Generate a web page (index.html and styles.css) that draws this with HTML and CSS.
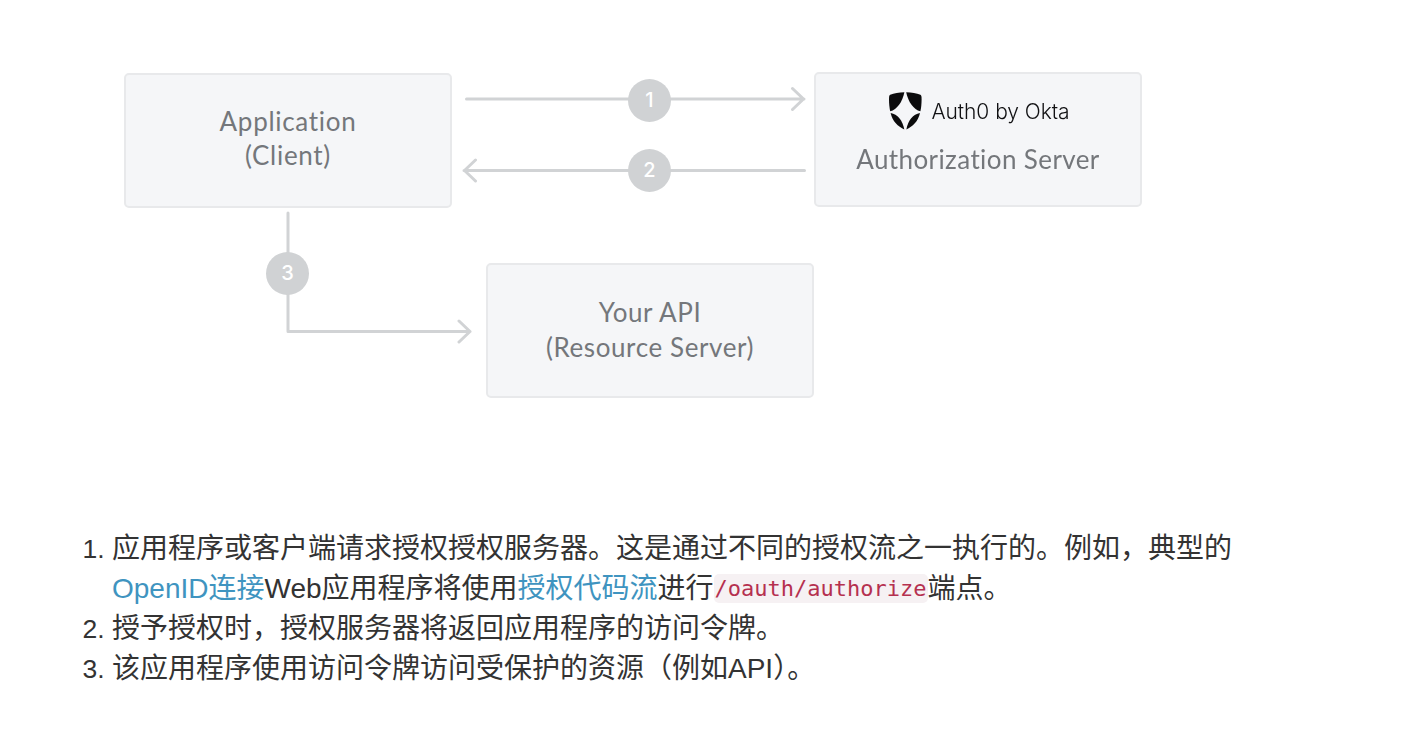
FILE: index.html
```html
<!DOCTYPE html>
<html lang="zh">
<head>
<meta charset="utf-8">
<title>Auth flow</title>
<link rel="stylesheet" href="styles.css">
</head>
<body>
<div class="diagram">
  <svg class="wires" width="1410" height="420" viewBox="0 0 1410 420" fill="none">
    <path d="M466.500 99H804M792.500 88.500L803.500 99L792.500 109.500"/>
    <path d="M804.500 170.500H464M475.500 160L464.500 170.500L475.500 181"/>
    <path d="M288 213V331.500H470M459 321L470 331.500L459 342"/>
  </svg>
  <div class="node node-app">Application<br>(Client)</div>
  <div class="node node-auth">
    <div class="brand">
      <svg class="shield" width="33" height="38" viewBox="0 0 33 38">
        <path d="M15.400 .2C10 .5 5 1.300 1.200 2.800C.3 3.200 0 4.300 0 7C0 12 .4 15.500 1.200 19.300C8 17.500 13.400 10 15.400 .2Z"/>
        <path d="M17.200 .2C22.600 .5 27.600 1.300 31.400 2.800C32.300 3.200 32.600 4.300 32.600 7C32.600 12 32.200 15.500 31.400 19.300C24.600 17.500 19.200 10 17.200 .2Z"/>
        <path d="M1.600 21C8.500 22.200 13.600 28.500 15.300 37.400C9 34.500 3.500 29.500 1.600 21Z"/>
        <path d="M31 21C24.100 22.200 19 28.500 17.300 37.400C23.600 34.500 29.100 29.500 31 21Z"/>
      </svg>
      <span class="brand-name">Auth0 by Okta</span>
    </div>
    <div>Authorization Server</div>
  </div>
  <div class="node node-api">Your API<br>(Resource Server)</div>
  <span class="step step-1">1</span>
  <span class="step step-2">2</span>
  <span class="step step-3">3</span>
</div>
<ol class="steps">
  <li>应用程序或客户端请求授权授权服务器。这是通过不同的授权流之一执行的。例如，典型的<a href="#">OpenID连接</a>Web应用程序将使用<a href="#">授权代码流</a>进行<code>/oauth/authorize</code>端点。</li>
  <li>授予授权时，授权服务器将返回应用程序的访问令牌。</li>
  <li>该应用程序使用访问令牌访问受保护的资源（例如API）。</li>
</ol>
</body>
</html>
```
FILE: styles.css
```css
html, body {
  margin: 0;
  background: #fff;
}
.diagram {
  position: relative;
  height: 529px;
  filter: blur(0.35px);
}
.wires {
  position: absolute;
  left: 0;
  top: 0;
}
.wires path {
  stroke: #d1d3d5;
  stroke-width: 3;
  stroke-linecap: round;
  stroke-linejoin: round;
}
.node {
  position: absolute;
  box-sizing: border-box;
  width: 328px;
  height: 135px;
  display: flex;
  flex-direction: column;
  align-items: center;
  justify-content: center;
  background: #f5f6f8;
  border: 2px solid #e8e9eb;
  border-radius: 5px;
  font: 400 26px/35px Lato, sans-serif;
  color: #74777b;
  text-align: center;
  letter-spacing: 0.4px;
}
.node-app { left: 124px; top: 73px; line-height: 34px; padding-bottom: 5px; letter-spacing: 0.7px; }
.node-auth { left: 814px; top: 72px; justify-content: flex-start; padding-top: 17px; }
.node-api { left: 486px; top: 263px; padding-bottom: 2px; letter-spacing: 0.6px; }
.brand {
  display: flex;
  align-items: center;
  gap: 9px;
  height: 40px;
  margin: 0 0 11px 3px;
}
.shield path { fill: #0b0b0c; }
.brand-name {
  font: 300 21px/32px Inter, sans-serif;
  color: #111113;
  letter-spacing: -0.05px;
  padding-top: 1px;
}
.step {
  position: absolute;
  width: 43px;
  height: 43px;
  border-radius: 50%;
  background: #d0d2d4;
  color: #fff;
  font: 500 20px/43px Inter, sans-serif;
  text-align: center;
}
.step-1 { left: 628px; top: 78.500px; }
.step-2 { left: 628px; top: 149px; }
.step-3 { left: 266px; top: 252px; }
.steps {
  margin: 0;
  padding: 0 0 0 112px;
  width: 1150px;
  font: 400 28px/40px "Liberation Sans", "Noto Sans CJK SC", sans-serif;
  color: #333;
}
.steps li::marker {
  font-size: 26.500px;
}
.steps a {
  color: #3f94c0;
  text-decoration: none;
}
.steps code {
  display: inline-block;
  height: 29px;
  padding: 0 1px;
  font: 400 22px/29px "DejaVu Sans Mono", monospace;
  color: #b5304f;
  background: #f6f1f3;
  border-radius: 5px;
  vertical-align: 2px;
}
```
